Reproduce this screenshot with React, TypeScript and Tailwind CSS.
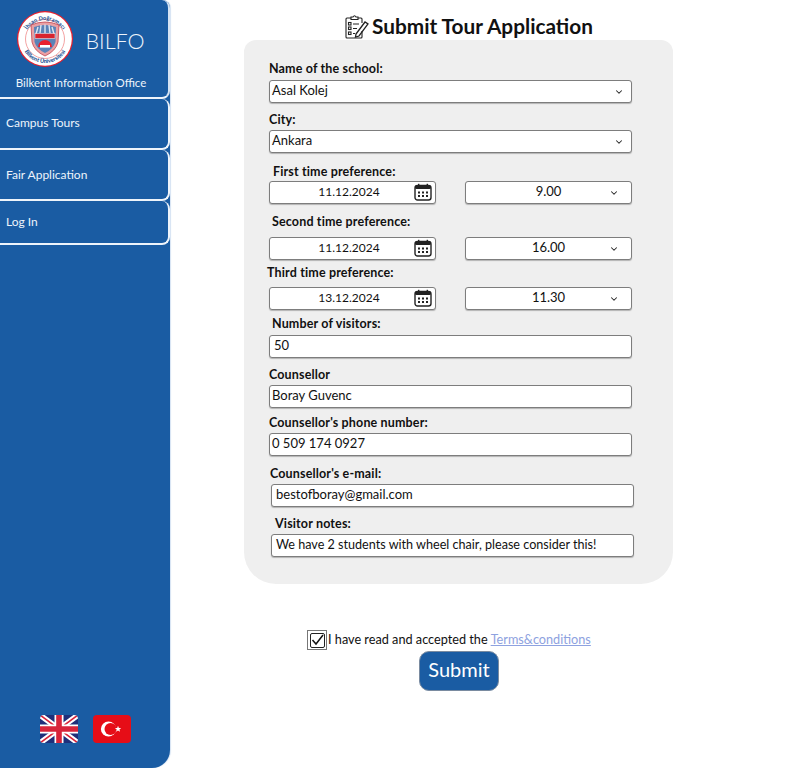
import React from "react";
import { ChevronDown } from "lucide-react";

const fieldBox = "h-[23px] pb-[1px] bg-white border border-[#7d7d7d] rounded-[3px] flex items-center text-[#111] shadow-[0_1px_1px_rgba(0,0,0,0.25)]";

function Logo() {
  return (
    <svg width="58" height="58" viewBox="0 0 58 58" className="shrink-0">
      <defs>
        <path id="arcTop" d="M8 31 A21 21 0 0 1 50 31" />
        <path id="arcBottom" d="M5 29 A24 24 0 0 0 53 29" />
      </defs>
      <circle cx="29" cy="29" r="28" fill="#e8202e" />
      <circle cx="29" cy="29" r="26.8" fill="#fff" />
      <circle cx="29" cy="29" r="19.5" fill="#fff" stroke="#f08a8a" strokeWidth="0.8" />
      <text fontFamily="Lato, sans-serif" fontWeight="900" fontSize="5.6" fill="#1b4f93">
        <textPath href="#arcTop" startOffset="50%" textAnchor="middle">İhsan Doğramacı</textPath>
      </text>
      <text fontFamily="Lato, sans-serif" fontWeight="900" fontSize="5.6" fill="#1b4f93">
        <textPath href="#arcBottom" startOffset="50%" textAnchor="middle">Bilkent Üniversitesi</textPath>
      </text>
      <path d="M15 15 Q29 9 43 15 L42 32 Q40 41 29 46 Q18 41 16 32 Z" fill="#e9a0a4" stroke="#c3414b" strokeWidth="0.8" />
      <path d="M18 17 Q29 13 40 17 L39.5 32 Q37.5 39 29 43 Q20.5 39 18.5 32 Z" fill="#5b83b8" />
      <path d="M20 24 L22 17 M24 23 L25 15 M29 23 L29 14.5 M34 23 L33 15 M38 24 L36 17" stroke="#dce6f2" strokeWidth="1.4" />
      <rect x="19" y="23.5" width="20" height="5" fill="#d8232f" stroke="#fff" strokeWidth="0.5" />
      <path d="M22 37 A7 7 0 0 1 36 37 Z" fill="#e8202e" />
      <rect x="24" y="35" width="10" height="2.6" fill="#fff" />
    </svg>
  );
}

function UkFlag() {
  return (
    <svg width="38" height="28" viewBox="0 0 38 28" className="rounded-[4px]">
      <rect width="38" height="28" fill="#1f2f7a" />
      <path d="M0 0 L38 28 M38 0 L0 28" stroke="#fff" strokeWidth="5.5" />
      <path d="M0 0 L38 28 M38 0 L0 28" stroke="#d8243a" strokeWidth="1.6" />
      <path d="M19 0 V28 M0 14 H38" stroke="#fff" strokeWidth="9" />
      <path d="M19 0 V28 M0 14 H38" stroke="#d8243a" strokeWidth="5.6" />
    </svg>
  );
}

function TrFlag() {
  return (
    <svg width="38" height="28" viewBox="0 0 38 28" className="rounded-[4px]">
      <rect width="38" height="28" fill="#e60d17" />
      <circle cx="15.5" cy="14" r="7.6" fill="#fff" />
      <circle cx="17.5" cy="14" r="6" fill="#e60d17" />
      <path d="M25 10.8 L25.9 13 L28.2 13 L26.4 14.5 L27.1 16.8 L25 15.5 L23 16.8 L23.7 14.5 L21.9 13 L24.2 13 Z" fill="#fff" />
    </svg>
  );
}

function ClipboardIcon() {
  return (
    <svg width="24" height="25" viewBox="0 0 24 25" fill="none" stroke="#222" strokeWidth="1.1" className="shrink-0">
      <path d="M6 4 H2 Q1 4 1 5 V23 Q1 24 2 24 H16 Q17 24 17 23 V17" />
      <path d="M13 4 H16 Q17 4 17 5 V9" />
      <path d="M6 5.5 V3 H8 Q9.5 0.5 11 3 H13 V5.5 Z" />
      <rect x="3.5" y="8.5" width="2.5" height="2.5" />
      <rect x="3.5" y="13" width="2.5" height="2.5" />
      <rect x="3.5" y="18" width="2.5" height="2.5" />
      <path d="M8 10 H14 M8 14.5 H12 M8 19.5 H10" />
      <path d="M11 20 L20 8 L23 10 L14 22 L10.5 23 Z" strokeWidth="1.3" />
    </svg>
  );
}

function CalendarIcon() {
  return (
    <svg width="18" height="18" viewBox="0 0 18 18" className="shrink-0">
      <rect x="1" y="2.5" width="16" height="14.5" rx="2.5" fill="#fff" stroke="#222" strokeWidth="1.4" />
      <rect x="1" y="2.5" width="16" height="3.5" rx="1.5" fill="#222" />
      <rect x="4" y="0.8" width="1.4" height="3" fill="#222" />
      <rect x="12.6" y="0.8" width="1.4" height="3" fill="#222" />
      {[4, 8, 12].map((x) =>
        [8.5, 12].map((y) => <rect key={`${x}-${y}`} x={x} y={y} width="2" height="2" fill="#222" />)
      )}
    </svg>
  );
}

function SelectBox({ value }: { value: string }) {
  return (
    <div className={`${fieldBox} w-[363px] px-[2px] justify-between text-[13px]`}>
      <span>{value}</span>
      <ChevronDown size={10} strokeWidth={2.5} className="mr-[5px] mt-[2px] text-[#222]" />
    </div>
  );
}

function TimeRow({ date, time }: { date: string; time: string }) {
  return (
    <div className="flex w-[363px] justify-between">
      <div className={`${fieldBox} w-[167px] pr-[3px] text-[12px]`}>
        <span className="flex-1 text-center pl-[14px]">{date}</span>
        <CalendarIcon />
      </div>
      <div className={`${fieldBox} w-[167px] pr-[12px] text-[13px]`}>
        <span className="flex-1 text-center pl-[22px]">{time}</span>
        <ChevronDown size={10} strokeWidth={2.5} className="mt-[2px] text-[#222]" />
      </div>
    </div>
  );
}

function Label({ text, className }: { text: string; className: string }) {
  return <div className={`h-4 leading-[18px] text-[12.5px] font-bold tracking-[0.15px] text-[#111] ${className}`}>{text}</div>;
}

export default function App() {
  const navItems = [
    { label: "Campus Tours", h: "h-[51px]", pt: "pb-[1px]" },
    { label: "Fair Application", h: "h-[51px]", pt: "" },
    { label: "Log In", h: "h-[44px]", pt: "" },
  ];

  return (
    <div className="flex w-[788px] h-[768px] bg-white font-['Lato',sans-serif] overflow-hidden">
      <aside className="w-[170px] h-full shrink-0 bg-[#1a5ca3] rounded-tr-[8px] rounded-br-[18px] flex flex-col text-[#eef4fb] shadow-[1px_0_1px_#d5e3f3]">
        <div className="h-[99px] border-b-2 border-r-2 border-[#eef4fb] rounded-br-[8px] rounded-tr-[8px] border-r-[#d5e3f3] flex flex-col items-center">
          <div className="flex items-center gap-[11px] pt-[10px] pr-[7px]">
            <Logo />
            <span className="text-[21.5px] font-light leading-none mt-[6px]">BILFO</span>
          </div>
          <div className="text-[11.5px] leading-4 mt-[7px] pr-[6px]">Bilkent Information Office</div>
        </div>
        {navItems.map((item) => (
          <div
            key={item.label}
            className={`${item.h} ${item.pt} border-2 border-l-0 border-t-0 border-[#eef4fb] rounded-r-[8px] flex items-center pl-[6px] text-[12px]`}
          >
            {item.label}
          </div>
        ))}
        <div className="mt-auto mb-[25px] flex justify-center gap-[15px] pl-[1px]">
          <UkFlag />
          <TrFlag />
        </div>
      </aside>

      <main className="flex-1 flex flex-col">
        <div className="h-[40px] flex items-center pl-[175px] pt-[13px] gap-[3px]">
          <ClipboardIcon />
          <h1 className="text-[20.8px] font-bold leading-none text-[#111]">Submit Tour Application</h1>
        </div>

        <div className="ml-[74px] w-[429px] h-[544px] bg-[#efefef] rounded-t-[12px] rounded-b-[32px] pt-[20px] pl-[25px]">
          <Label text="Name of the school:" className="mb-[4px]" />
          <SelectBox value="Asal Kolej" />
          <Label text="City:" className="mt-[8px] mb-[3px]" />
          <SelectBox value="Ankara" />
          <Label text="First time preference:" className="mt-[10px] mb-[2px] pl-[4px]" />
          <TimeRow date="11.12.2024" time="9.00" />
          <Label text="Second time preference:" className="mt-[9px] mb-[8px] pl-[3px]" />
          <TimeRow date="11.12.2024" time="16.00" />
          <Label text="Third time preference:" className="mt-[4px] mb-[7px] -ml-[2px]" />
          <TimeRow date="13.12.2024" time="11.30" />
          <Label text="Number of visitors:" className="mt-[5px] mb-[4px] pl-[3px]" />
          <div className={`${fieldBox} w-[363px] px-[4px] text-[13px]`}>50</div>
          <Label text="Counsellor" className="mt-[8px] mb-[3px]" />
          <div className={`${fieldBox} w-[363px] px-[2px] text-[13px]`}>Boray Guvenc</div>
          <Label text="Counsellor's phone number:" className="mt-[6px] mb-[3px]" />
          <div className={`${fieldBox} w-[363px] px-[2px] text-[13px]`}>0 509 174 0927</div>
          <Label text="Counsellor's e-mail:" className="mt-[9px] mb-[3px] pl-[1px]" />
          <div className={`${fieldBox} w-[363px] ml-[2px] px-[4px] text-[13px]`}>bestofboray@gmail.com</div>
          <Label text="Visitor notes:" className="mt-[8px] mb-[3px] pl-[6px]" />
          <div className={`${fieldBox} w-[363px] ml-[2px] px-[4px] text-[12.6px]`}>We have 2 students with wheel chair, please consider this!</div>
        </div>

        <div className="ml-[137px] mt-[46px] flex items-center h-[20px] text-[12.7px] text-[#111]">
          <div className="w-[20px] h-[20px] border border-[#777] bg-white flex items-center justify-center shrink-0">
            <div className="w-[15px] h-[15px] border border-[#222] rounded-[2px] flex items-center justify-center">
              <svg width="13" height="12" viewBox="0 0 13 12" fill="none" stroke="#111" strokeWidth="1.5">
                <path d="M1.5 6 L5 10 L12 1" />
              </svg>
            </div>
          </div>
          <span className="ml-[1px]">I have read and accepted the </span>
          <span className="ml-[3px] text-[#8ea2e0] underline">Terms&conditions</span>
        </div>

        <div className="ml-[249px] mt-[1px] pb-[4px] w-[80px] h-[40px] bg-[#1a5ca3] border border-[#7a8ba0] rounded-[10px] flex items-center justify-center text-white text-[20px]">
          Submit
        </div>
      </main>
    </div>
  );
}
